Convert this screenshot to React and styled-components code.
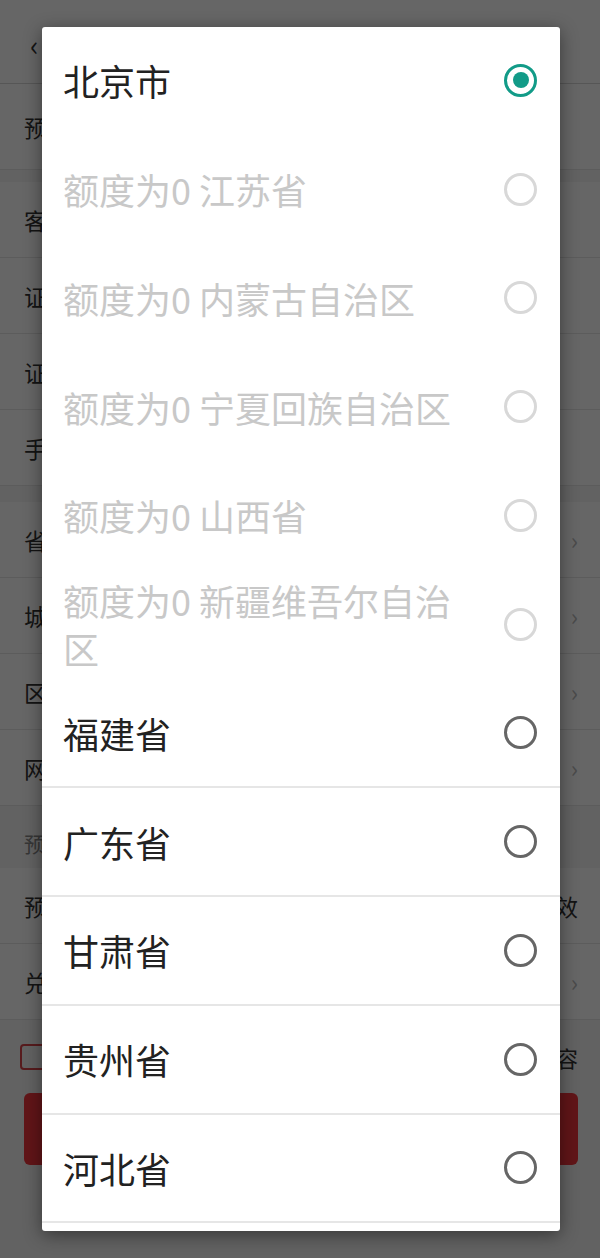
import React from 'react'
import styled, { createGlobalStyle } from 'styled-components'

const GlobalStyle = createGlobalStyle`
  html, body {
    margin: 0;
    padding: 0;
    background: #fff;
    font-family: "Noto Sans CJK SC", "Noto Sans", sans-serif;
  }
`

const Page = styled.div`
  position: relative;
  width: 600px;
  height: 1258px;
  overflow: hidden;
  background: #f4f4f4;
`

const Header = styled.div`
  height: 84px;
  display: flex;
  align-items: center;
  justify-content: center;
  background: #fff;
  border-bottom: 1px solid #d6d6d6;
  box-sizing: border-box;
  font-size: 30px;
  color: #222;
  position: relative;
`

const Back = styled.span`
  position: absolute;
  left: 30px;
  top: 24px;
  font-size: 28px;
  color: #333;
`

const FormRow = styled.div`
  height: ${(p) => p.h || 76}px;
  display: flex;
  align-items: center;
  justify-content: space-between;
  padding: 0 22px 0 24px;
  background: #fff;
  border-bottom: 1px solid #e6e6e6;
  box-sizing: border-box;
  font-size: 23px;
  color: #333;
`

const Gap = styled.div`
  height: ${(p) => p.h}px;
`

const SectionTitle = styled.div`
  height: 62px;
  display: flex;
  align-items: flex-end;
  padding: 0 24px 10px;
  box-sizing: border-box;
  font-size: 21px;
  color: #888;
`

const RightText = styled.span`
  color: #333;
`

const Chevron = styled.span`
  color: #bbb;
  font-size: 24px;
`

const Agree = styled.div`
  height: 73px;
  display: flex;
  align-items: center;
  padding: 0 22px 0 20px;
  gap: 12px;
  font-size: 22px;
  color: #333;
`

const CheckBox = styled.span`
  width: 22px;
  height: 22px;
  border: 2px solid #d9444a;
  border-radius: 4px;
`

const AgreeText = styled.span`
  flex: 1;
  text-align: right;
`

const SubmitButton = styled.div`
  margin: 0 22px 0 24px;
  height: 72px;
  border-radius: 6px;
  background: #f2353c;
  color: #fff;
  font-size: 28px;
  display: flex;
  align-items: center;
  justify-content: center;
`

const Overlay = styled.div`
  position: absolute;
  inset: 0;
  background: rgba(0, 0, 0, 0.6);
`

const Dialog = styled.div`
  position: absolute;
  left: 42px;
  top: 27px;
  width: 518px;
  height: 1204px;
  background: #fff;
  border-radius: 3px;
  overflow: hidden;
  box-shadow: 0 4px 18px rgba(0, 0, 0, 0.45);
`

const Option = styled.div`
  height: 108.75px;
  display: flex;
  align-items: center;
  padding: 0 23px 0 21px;
  box-sizing: border-box;
  border-bottom: 2px solid ${(p) => (p.divider ? '#e6e6e6' : 'transparent')};
`

const OptionLabel = styled.span`
  flex: 1;
  margin-right: 24px;
  font-size: 36px;
  line-height: 48px;
  color: ${(p) => (p.disabled ? '#c8c8c8' : '#222')};
`

const Radio = styled.span`
  flex: none;
  width: 33px;
  height: 33px;
  border-radius: 50%;
  box-sizing: border-box;
  border: 3px solid
    ${(p) => (p.checked ? '#129b88' : p.disabled ? '#d8d8d8' : '#666')};
  display: flex;
  align-items: center;
  justify-content: center;

  &::after {
    content: '';
    display: ${(p) => (p.checked ? 'block' : 'none')};
    width: 16px;
    height: 16px;
    border-radius: 50%;
    background: #129b88;
  }
`

const options = [
  { name: '北京市', checked: true },
  { name: '额度为0 江苏省', disabled: true },
  { name: '额度为0 内蒙古自治区', disabled: true },
  { name: '额度为0 宁夏回族自治区', disabled: true },
  { name: '额度为0 山西省', disabled: true },
  { name: '额度为0 新疆维吾尔自治区', disabled: true },
  { name: '福建省', divider: true },
  { name: '广东省', divider: true },
  { name: '甘肃省', divider: true },
  { name: '贵州省', divider: true },
  { name: '河北省', divider: true },
]

export default function App() {
  return (
    <Page>
      <GlobalStyle />
      <Header>
        <Back>‹</Back>
        预约兑换
      </Header>
      <FormRow h={86}>预约类型</FormRow>
      <Gap h={12} />
      <FormRow>客户姓名</FormRow>
      <FormRow>证件类型</FormRow>
      <FormRow>证件号码</FormRow>
      <FormRow>手机号码</FormRow>
      <Gap h={16} />
      <FormRow>
        省份<Chevron>›</Chevron>
      </FormRow>
      <FormRow>
        城市<Chevron>›</Chevron>
      </FormRow>
      <FormRow>
        区县<Chevron>›</Chevron>
      </FormRow>
      <FormRow>
        网点<Chevron>›</Chevron>
      </FormRow>
      <SectionTitle>预约信息</SectionTitle>
      <FormRow>
        预约金额<RightText>以实际到账为准，当日有效</RightText>
      </FormRow>
      <FormRow>
        兑换方式<Chevron>›</Chevron>
      </FormRow>
      <Agree>
        <CheckBox />
        <AgreeText>我已阅读并同意预约兑换相关协议内容</AgreeText>
      </Agree>
      <SubmitButton>提交预约</SubmitButton>

      <Overlay />
      <Dialog>
        {options.map((o) => (
          <Option key={o.name} divider={o.divider}>
            <OptionLabel disabled={o.disabled}>{o.name}</OptionLabel>
            <Radio checked={o.checked} disabled={o.disabled} />
          </Option>
        ))}
      </Dialog>
    </Page>
  )
}
